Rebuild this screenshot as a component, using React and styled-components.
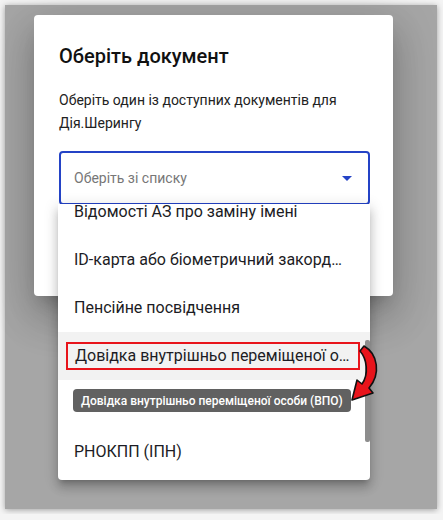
import React, { useLayoutEffect, useRef } from "react";
import styled, { createGlobalStyle } from "styled-components";

const Global = createGlobalStyle`
  html, body {
    margin: 0;
    padding: 0;
    background: #f4f4f4;
    font-family: Roboto, "Liberation Sans", Arial, sans-serif;
  }
`;

const Frame = styled.div`
  position: relative;
  margin: 5px;
  width: 432px;
  height: 504px;
  background: #a6a6a6;
  box-shadow: 0 1px 6px rgba(0, 0, 0, 0.35);
  padding: 10px 0 0 29px;
  box-sizing: border-box;
`;

const Dialog = styled.div`
  width: 359px;
  height: 281px;
  background: #fff;
  border-radius: 4px;
  box-sizing: border-box;
  padding: 25px 24px 0 25px;
  box-shadow: 0px 11px 15px -7px rgba(0, 0, 0, 0.2),
    0px 24px 38px 3px rgba(0, 0, 0, 0.14), 0px 9px 46px 8px rgba(0, 0, 0, 0.12);
`;

const Title = styled.h2`
  margin: 0;
  font-size: 20px;
  line-height: 32px;
  font-weight: 500;
  color: #111;
`;

const Description = styled.p`
  margin: 17px 0 16px;
  font-size: 14px;
  line-height: 23px;
  color: #222;
`;

const SelectWrap = styled.div`
  position: relative;
  width: 311px;
`;

const SelectBox = styled.div`
  height: 54px;
  box-sizing: border-box;
  border: 2px solid #2443c6;
  border-radius: 4px;
  display: flex;
  align-items: center;
  justify-content: space-between;
  padding: 0 9px 0 13px;
  font-size: 14px;
  color: #777;
`;

const Menu = styled.div`
  position: absolute;
  top: calc(100% - 1px);
  left: -1px;
  width: 312px;
  height: 276px;
  background: #fff;
  border-radius: 0 0 4px 4px;
  box-shadow: 0px 5px 5px -3px rgba(0, 0, 0, 0.2),
    0px 8px 10px 1px rgba(0, 0, 0, 0.14), 0px 3px 14px 2px rgba(0, 0, 0, 0.12);
`;

const List = styled.ul`
  list-style: none;
  margin: 0;
  padding: 8px 0;
  height: 100%;
  box-sizing: border-box;
  overflow: hidden;
  border-radius: 0 0 4px 4px;
`;

const Item = styled.li`
  height: 48px;
  display: flex;
  align-items: center;
  padding: ${(p) => (p.$marked ? "0 10px 0 8px" : "0 22px 0 16px")};
  background: ${(p) => (p.$marked ? "#f2f2f2" : "transparent")};
  font-size: 16px;
  color: #1c1c24;
`;

const Label = styled.span`
  display: block;
  flex: 1;
  min-width: 0;
  white-space: nowrap;
  overflow: hidden;
  text-overflow: ellipsis;
  line-height: 24px;
  ${(p) =>
    p.$marked &&
    `
    border: 2px solid #e8141b;
    padding: 0 7px;
  `}
`;

const Tooltip = styled.div`
  position: absolute;
  left: 15px;
  top: 185px;
  background: #616161;
  color: #fff;
  border-radius: 4px;
  padding: 0 8px;
  height: 23px;
  display: flex;
  align-items: center;
  font-size: 12px;
  font-weight: 500;
  white-space: nowrap;
`;

const Thumb = styled.div`
  position: absolute;
  right: 0;
  top: 136px;
  width: 5px;
  height: 102px;
  background: #8d8d8d;
  border-radius: 2px;
`;

const Pointer = styled.svg`
  position: absolute;
  left: 290px;
  top: 138px;
`;

const docs = [
  "Паспорт громадянина України",
  "Закордонний паспорт",
  "Посвідчення водія",
  "Відомості АЗ про заміну імені",
  "ID-карта або біометричний закордонний паспорт",
  "Пенсійне посвідчення",
  "Довідка внутрішньо переміщеної особи (ВПО)",
  "",
  "РНОКПП (ІПН)",
];

const App = () => {
  const listRef = useRef(null);

  useLayoutEffect(() => {
    if (listRef.current) listRef.current.scrollTop = 168;
  }, []);

  return (
    <>
      <Global />
      <Frame>
        <Dialog>
          <Title>Оберіть документ</Title>
          <Description>
            Оберіть один із доступних документів для Дія.Шерингу
          </Description>
          <SelectWrap>
            <SelectBox>
              <span>Оберіть зі списку</span>
              <svg width="24" height="24" viewBox="0 0 24 24">
                <path d="M7 10l5 5 5-5z" fill="#2443c6" />
              </svg>
            </SelectBox>
            <Menu>
              <List ref={listRef}>
                {docs.map((d, i) => {
                  const marked = i === 6;
                  return (
                    <Item key={i} $marked={marked}>
                      <Label $marked={marked}>{d}</Label>
                    </Item>
                  );
                })}
              </List>
              <Thumb />
              <Tooltip>Довідка внутрішньо переміщеної особи (ВПО)</Tooltip>
              <Pointer width="36" height="66" viewBox="0 0 36 66">
                <path
                  d="M16 4 C30 12 33 32 21 46 L25 51 L4 58 L9 38 L14 42 C21 32 19 17 12 9 Z"
                  fill="#e8141b"
                  stroke="#111"
                  strokeWidth="1.6"
                  strokeLinejoin="round"
                />
              </Pointer>
            </Menu>
          </SelectWrap>
        </Dialog>
      </Frame>
    </>
  );
};

export default App;
